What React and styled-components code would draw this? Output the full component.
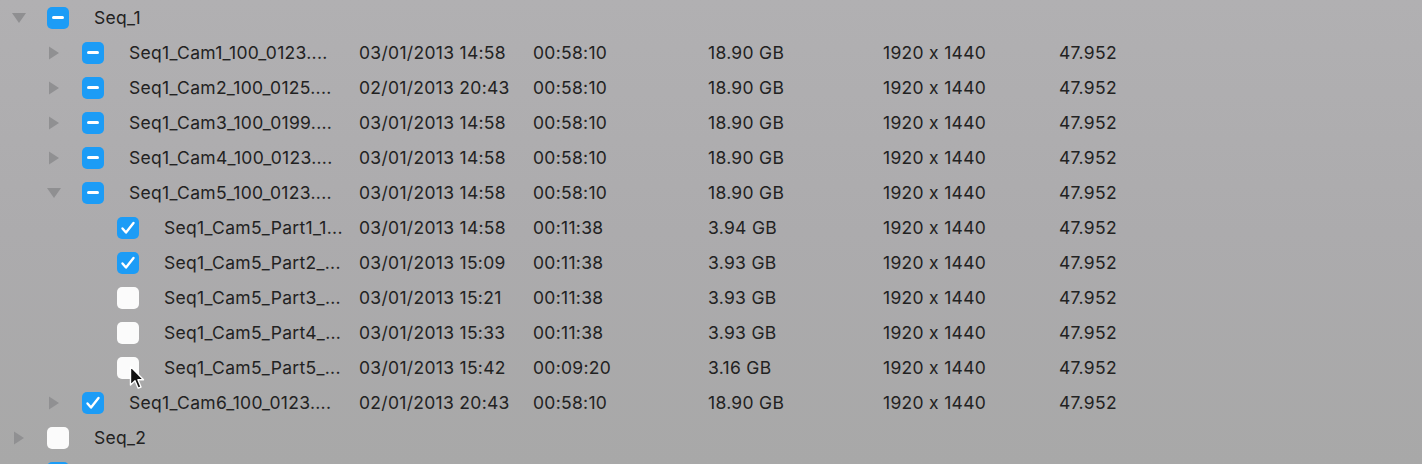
import React from "react";
import styled, { createGlobalStyle } from "styled-components";

const Global = createGlobalStyle`
  html, body { margin: 0; padding: 0; }
  body {
    width: 1422px; height: 464px; overflow: hidden;
    background: linear-gradient(180deg, #b1b0b2 0%, #acabad 50%, #a8a8a8 100%);
    font-family: Inter, "Liberation Sans", Arial, sans-serif;
  }
`;

const Table = styled.div`
  position: relative;
  display: flex;
  flex-direction: column;
  width: 1422px;
  height: 464px;
  overflow: hidden;
`;

const Row = styled.div`
  display: grid;
  grid-template-columns: 359px 174px 175px 175px 176px 1fr;
  align-items: center;
  height: 35px;
  flex: none;
  color: #222;
  font-size: 17.5px;
  letter-spacing: 0.3px;
`;

const NameCell = styled.div`
  display: flex;
  align-items: center;
  padding-left: ${(p) => p.$level * 35 + 8}px;
  white-space: nowrap;
`;

const Disclosure = styled.span`
  width: 39px;
  height: 16px;
  flex: none;
  display: flex;
  align-items: center;
  padding-left: 3px;
  box-sizing: border-box;
`;

const Box = styled.span`
  width: 22px;
  height: 22px;
  flex: none;
  box-sizing: border-box;
  border-radius: 5px;
  background: ${(p) => (p.$state === "off" ? "#fbfbfb" : "#1c9cf6")};
  display: flex;
  align-items: center;
  justify-content: center;
  margin-right: 25px;
`;

const Dash = styled.span`
  width: 12px;
  height: 3px;
  border-radius: 1.5px;
  background: #fff;
`;

const Cell = styled.div`
  white-space: nowrap;
`;

const Cursor = styled.svg`
  position: absolute;
  left: 129px;
  top: 365px;
`;

function Triangle({ open }) {
  if (open === undefined) return null;
  return open ? (
    <svg width="16" height="12" viewBox="0 0 16 12">
      <path d="M1 1 L15 1 L8 11 Z" fill="#8f8f91" />
    </svg>
  ) : (
    <svg width="16" height="16" viewBox="0 0 16 16">
      <path d="M3 1.5 L13 8 L3 14.5 Z" fill="#909092" />
    </svg>
  );
}

function Check({ state }) {
  return (
    <Box $state={state}>
      {state === "mixed" && <Dash />}
      {state === "on" && (
        <svg width="16" height="14" viewBox="0 0 16 14">
          <path d="M2.5 7.5 L6 11.5 L13.5 2" stroke="#fff" strokeWidth="2.4" fill="none" strokeLinecap="round" strokeLinejoin="round" />
        </svg>
      )}
    </Box>
  );
}

const rows = [
  { level: 0, open: true, state: "mixed", name: "Seq_1" },
  { level: 1, open: false, state: "mixed", name: "Seq1_Cam1_100_0123....", d: "03/01/2013 14:58", t: "00:58:10", s: "18.90 GB" },
  { level: 1, open: false, state: "mixed", name: "Seq1_Cam2_100_0125....", d: "02/01/2013 20:43", t: "00:58:10", s: "18.90 GB" },
  { level: 1, open: false, state: "mixed", name: "Seq1_Cam3_100_0199....", d: "03/01/2013 14:58", t: "00:58:10", s: "18.90 GB" },
  { level: 1, open: false, state: "mixed", name: "Seq1_Cam4_100_0123....", d: "03/01/2013 14:58", t: "00:58:10", s: "18.90 GB" },
  { level: 1, open: true, state: "mixed", name: "Seq1_Cam5_100_0123....", d: "03/01/2013 14:58", t: "00:58:10", s: "18.90 GB" },
  { level: 2, state: "on", name: "Seq1_Cam5_Part1_1...", d: "03/01/2013 14:58", t: "00:11:38", s: "3.94 GB" },
  { level: 2, state: "on", name: "Seq1_Cam5_Part2_...", d: "03/01/2013 15:09", t: "00:11:38", s: "3.93 GB" },
  { level: 2, state: "off", name: "Seq1_Cam5_Part3_...", d: "03/01/2013 15:21", t: "00:11:38", s: "3.93 GB" },
  { level: 2, state: "off", name: "Seq1_Cam5_Part4_...", d: "03/01/2013 15:33", t: "00:11:38", s: "3.93 GB" },
  { level: 2, state: "off", name: "Seq1_Cam5_Part5_...", d: "03/01/2013 15:42", t: "00:09:20", s: "3.16 GB" },
  { level: 1, open: false, state: "on", name: "Seq1_Cam6_100_0123....", d: "02/01/2013 20:43", t: "00:58:10", s: "18.90 GB" },
  { level: 0, open: false, state: "off", name: "Seq_2" },
  { level: 0, open: false, state: "mixed", name: "" },
];

export default function App() {
  return (
    <>
      <Global />
      <Table>
        {rows.map((r, i) => (
          <Row key={i}>
            <NameCell $level={r.level}>
              <Disclosure>
                <Triangle open={r.open} />
              </Disclosure>
              <Check state={r.state} />
              <span>{r.name}</span>
            </NameCell>
            <Cell>{r.d}</Cell>
            <Cell>{r.t}</Cell>
            <Cell>{r.s}</Cell>
            <Cell>{r.d ? "1920 x 1440" : ""}</Cell>
            <Cell>{r.d ? "47.952" : ""}</Cell>
          </Row>
        ))}
        <Cursor width="16" height="26" viewBox="0 0 16 26">
          <path d="M1.5 1.5 L1.5 20 L6 15.8 L9.2 23.2 L12 22 L8.9 14.8 L14.5 14.8 Z" fill="#111" stroke="#fff" strokeWidth="1.4" strokeLinejoin="round" />
        </Cursor>
      </Table>
    </>
  );
}
